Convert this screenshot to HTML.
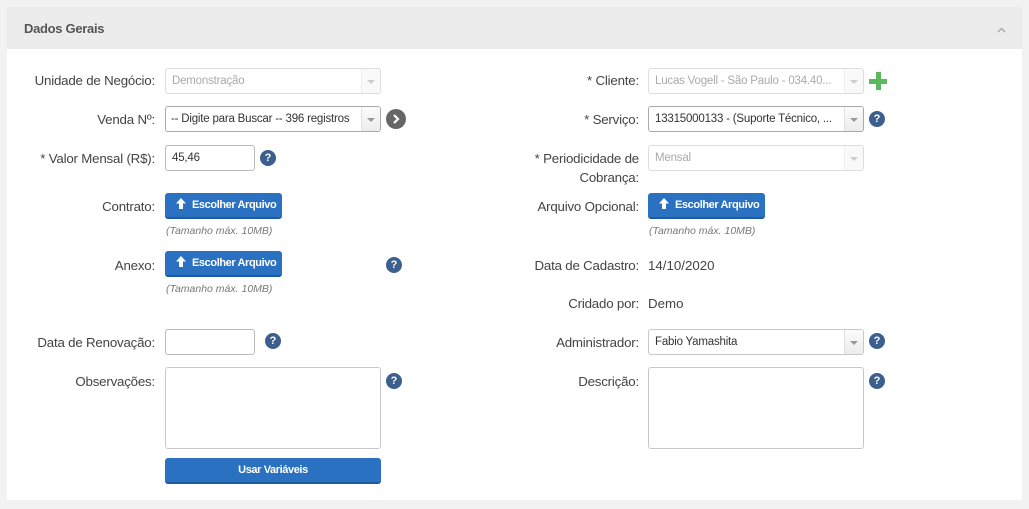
<!DOCTYPE html>
<html><head><meta charset="utf-8"><style>
*{box-sizing:border-box;margin:0;padding:0}
body{width:1029px;height:509px;background:#f2f2f2;font-family:"Liberation Sans",sans-serif;position:relative;overflow:hidden}
.panel{position:absolute;left:7px;top:7px;width:1015px;height:493px;background:#fff}
.hdr{position:absolute;left:7px;top:7px;width:1015px;height:42px;background:#ececec}
.hdr b{position:absolute;left:17px;top:14px;font-size:13px;color:#555;letter-spacing:-0.3px}
.a{position:absolute}
.lbl{position:absolute;font-size:13.3px;color:#444;text-align:right;letter-spacing:-0.2px;white-space:nowrap}
.inp{position:absolute;border:1px solid #c8c8c8;border-radius:3px;background:#fff;font-size:11.5px;letter-spacing:-0.2px;color:#333;padding:6px 6px;height:26px;white-space:nowrap;overflow:hidden}
.dis{background:#fff;color:#aaa;border-color:#ddd}
.sel:after{content:"";position:absolute;right:0;top:0;width:18px;height:100%;border-left:1px solid #e2e2e2;background:linear-gradient(#fbfbfb,#ececec)}
.sel:before{content:"";position:absolute;right:5px;top:11px;border:4px solid transparent;border-top:4px solid #999;z-index:2}
.dis.sel:after{background:#f9f9f9;border-left-color:#eee}
.dis.sel:before{border-top-color:#ccc}
.help{position:absolute;width:16px;height:16px;border-radius:50%;background:#3d5f8e;color:#fff;font-size:11px;font-weight:bold;text-align:center;line-height:16px}
.btn{position:absolute;background:#2a71c2;border-radius:3px;color:#fff;font-size:11px;letter-spacing:-0.4px;font-weight:bold;height:26px;line-height:25px;border-bottom:2px solid #1f5aa0;white-space:nowrap}
.hint{position:absolute;font-size:10.5px;color:#777;font-style:italic}
.txt{position:absolute;font-size:13.3px;color:#444}
.up{display:inline-block;vertical-align:-1px;margin-right:6px}
</style></head><body>
<div class="panel"></div>
<div class="hdr"><b>Dados Gerais</b>
<svg class="a" style="left:990px;top:20px" width="9" height="6" viewBox="0 0 9 6"><path d="M1 5L4.5 1.5L8 5" stroke="#aaa" stroke-width="1.5" fill="none"/></svg></div>

<svg width="0" height="0" style="position:absolute"><defs><symbol id="up" viewBox="0 0 10 11"><path d="M5 0L10 5.5H7V11H3V5.5H0Z" fill="#fff"/></symbol></defs></svg>

<div class="lbl" style="right:874px;top:73px">Unidade de Negócio:</div>
<div class="inp dis sel" style="left:165px;top:68px;width:216px">Demonstração</div>

<div class="lbl" style="right:874px;top:112px">Venda Nº:</div>
<div class="inp sel" style="left:165px;top:106px;width:216px;border-color:#aaa;padding-left:5px">-- Digite para Buscar -- 396 registros</div>
<div class="a" style="left:386px;top:109px;width:20px;height:20px;border-radius:50%;background:#666"><svg width="20" height="20"><path d="M8 6L12 10L8 14" stroke="#fff" stroke-width="2.2" fill="none"/></svg></div>

<div class="lbl" style="right:874px;top:151px">* Valor Mensal (R$):</div>
<div class="inp" style="left:165px;top:145px;width:90px;border-color:#bbb">45,46</div>
<div class="help" style="left:260px;top:150px">?</div>

<div class="lbl" style="right:874px;top:199px">Contrato:</div>
<div class="btn" style="left:165px;top:193px;width:117px;padding-left:11px"><svg class="up" width="10" height="11"><use href="#up"/></svg>Escolher Arquivo</div>
<div class="hint" style="left:166px;top:225px">(Tamanho máx. 10MB)</div>

<div class="lbl" style="right:874px;top:258px">Anexo:</div>
<div class="btn" style="left:165px;top:251px;width:117px;padding-left:11px"><svg class="up" width="10" height="11"><use href="#up"/></svg>Escolher Arquivo</div>
<div class="hint" style="left:166px;top:283px">(Tamanho máx. 10MB)</div>
<div class="help" style="left:386px;top:257px">?</div>

<div class="lbl" style="right:874px;top:335px">Data de Renovação:</div>
<div class="inp" style="left:165px;top:329px;width:90px;border-color:#bbb"></div>
<div class="help" style="left:265px;top:333px">?</div>

<div class="lbl" style="right:874px;top:374px">Observações:</div>
<div class="inp" style="left:165px;top:367px;width:216px;height:82px"></div>
<div class="help" style="left:386px;top:373px">?</div>
<div class="btn" style="left:165px;top:458px;width:216px;text-align:center">Usar Variáveis</div>

<div class="lbl" style="right:390px;top:73px">* Cliente:</div>
<div class="inp dis sel" style="left:648px;top:68px;width:216px;padding-right:22px">Lucas Vogell - São Paulo - 034.40...</div>
<div class="a" style="left:869px;top:79px;width:18px;height:5px;background:#5cb85c"></div>
<div class="a" style="left:876px;top:72px;width:5px;height:18px;background:#5cb85c"></div>

<div class="lbl" style="right:390px;top:112px">* Serviço:</div>
<div class="inp sel" style="left:648px;top:106px;width:216px;border-color:#aaa;padding-right:22px">13315000133 - (Suporte Técnico, ...</div>
<div class="help" style="left:869px;top:111px">?</div>

<div class="lbl" style="right:390px;top:149px;line-height:19px">* Periodicidade de<br>Cobrança:</div>
<div class="inp dis sel" style="left:648px;top:145px;width:216px">Mensal</div>

<div class="lbl" style="right:390px;top:199px">Arquivo Opcional:</div>
<div class="btn" style="left:648px;top:193px;width:117px;padding-left:11px"><svg class="up" width="10" height="11"><use href="#up"/></svg>Escolher Arquivo</div>
<div class="hint" style="left:649px;top:225px">(Tamanho máx. 10MB)</div>

<div class="lbl" style="right:390px;top:258px">Data de Cadastro:</div>
<div class="txt" style="left:648px;top:258px">14/10/2020</div>
<div class="lbl" style="right:390px;top:296px">Cridado por:</div>
<div class="txt" style="left:648px;top:296px">Demo</div>

<div class="lbl" style="right:390px;top:335px">Administrador:</div>
<div class="inp sel" style="left:648px;top:329px;width:216px">Fabio Yamashita</div>
<div class="help" style="left:869px;top:333px">?</div>

<div class="lbl" style="right:390px;top:374px">Descrição:</div>
<div class="inp" style="left:648px;top:367px;width:216px;height:82px"></div>
<div class="help" style="left:869px;top:373px">?</div>
</body></html>
